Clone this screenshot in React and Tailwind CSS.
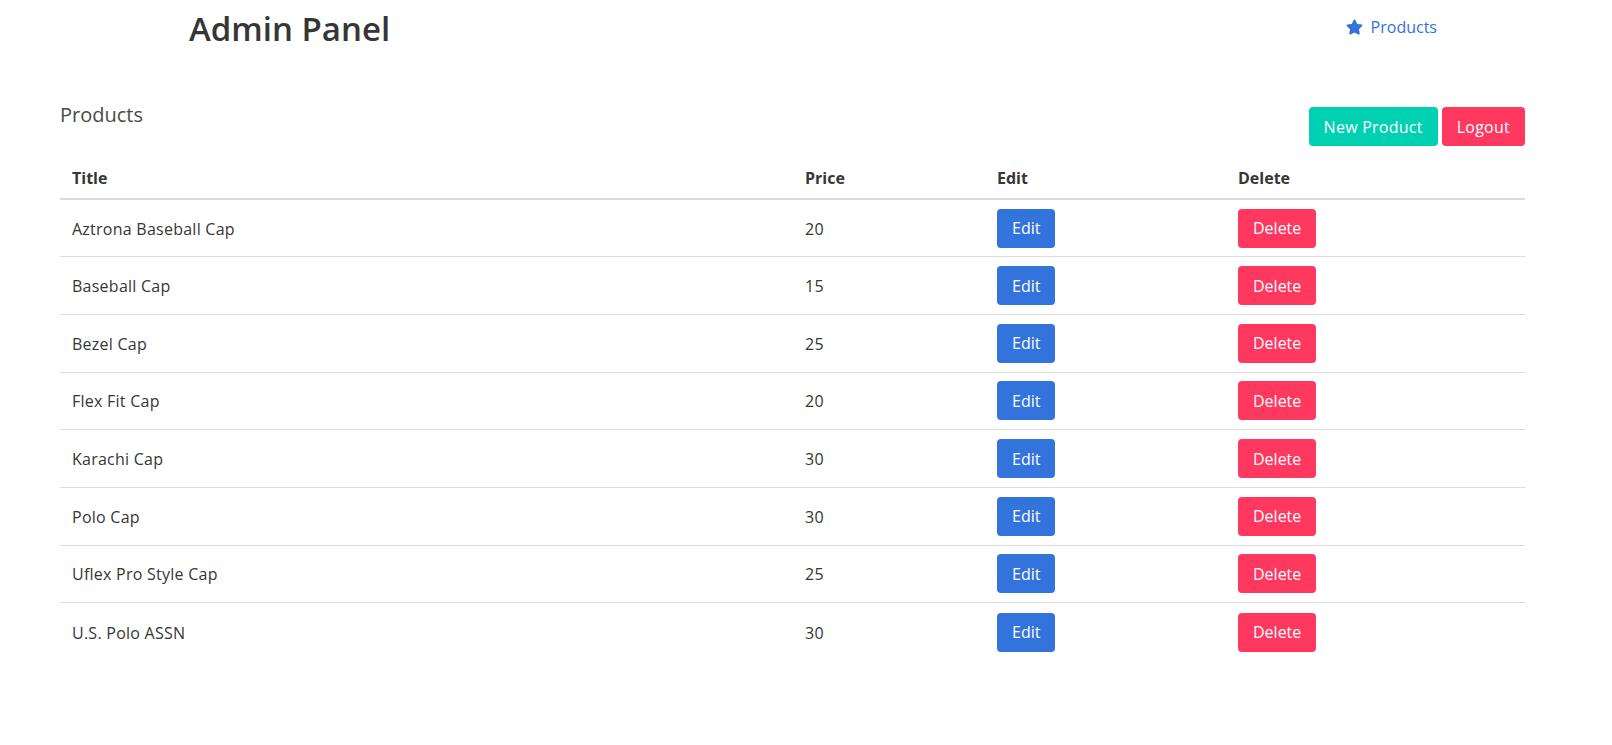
import React from "react";

const rows = [
  ["Aztrona Baseball Cap", "20"],
  ["Baseball Cap", "15"],
  ["Bezel Cap", "25"],
  ["Flex Fit Cap", "20"],
  ["Karachi Cap", "30"],
  ["Polo Cap", "30"],
  ["Uflex Pro Style Cap", "25"],
  ["U.S. Polo ASSN", "30"],
];

function Star() {
  return (
    <svg viewBox="0 0 576 512" className="w-[17px] h-[16px]" fill="#3273dc">
      <path d="M259.3 17.8L194 150.2 47.9 171.5c-26.2 3.8-36.7 36.1-17.7 54.6l105.7 103-25 145.5c-4.5 26.3 23.2 46 46.4 33.7L288 439.6l130.7 68.7c23.2 12.2 50.9-7.4 46.4-33.7l-25-145.5 105.7-103c19-18.5 8.5-50.8-17.7-54.6L382 150.2 316.7 17.8c-11.7-23.6-45.6-23.9-57.4 0z" />
    </svg>
  );
}

export default function App() {
  return (
    <div
      className="min-h-[745px] bg-white text-[#363636] text-[16px] tracking-[0.25px]"
      style={{ fontFamily: '"Open Sans", "Noto Sans", sans-serif' }}
    >
      <header className="h-[54px] flex items-center justify-between pl-[189px] pr-[175px]">
        <h1 className="text-[33px] font-semibold leading-none mt-[3px] tracking-normal">Admin Panel</h1>
        <a className="flex items-center gap-[8px] text-[#3273dc] leading-6 tracking-normal">
          <Star />
          <span>Products</span>
        </a>
      </header>

      <main className="pl-[60px] pr-[87px] mt-[46px]">
        <div className="flex justify-between items-start">
          <h2 className="text-[20px] leading-[30px] font-normal text-[#4a4a4a] tracking-normal">Products</h2>
          <div className="flex gap-[4px] mt-[7px]">
            <button className="h-[39px] px-[15px] rounded-[4px] bg-[#00d1b2] text-white leading-6">New Product</button>
            <button className="h-[39px] px-[15px] rounded-[4px] bg-[#ff3860] text-white leading-6">Logout</button>
          </div>
        </div>

        <table className="w-full table-fixed border-collapse mt-[12px]">
          <colgroup>
            <col className="w-[733px]" />
            <col className="w-[192px]" />
            <col className="w-[241px]" />
            <col className="w-[299px]" />
          </colgroup>
          <thead>
            <tr className="border-b-2 border-[#dbdbdb]">
              <th className="text-left font-bold px-[12px] py-[8px] leading-6 tracking-normal">Title</th>
              <th className="text-left font-bold px-[12px] py-[8px] leading-6 tracking-normal">Price</th>
              <th className="text-left font-bold px-[12px] py-[8px] leading-6 tracking-normal">Edit</th>
              <th className="text-left font-bold px-[12px] py-[8px] leading-6 tracking-normal">Delete</th>
            </tr>
          </thead>
          <tbody>
            {rows.map(([title, price], i) => (
              <tr
                key={title}
                className={i < rows.length - 1 ? "h-[57.7px] border-b border-[#dbdbdb]" : "h-[58px]"}
              >
                <td className="px-[12px] align-middle leading-6 pt-[1px]">{title}</td>
                <td className="px-[12px] align-middle leading-6 pt-[1px]">{price}</td>
                <td className="px-[12px] align-middle">
                  <button className="h-[39px] px-[15px] rounded-[4px] bg-[#3273dc] text-white leading-6 tracking-normal">Edit</button>
                </td>
                <td className="px-[12px] align-middle">
                  <button className="h-[39px] px-[15px] rounded-[4px] bg-[#ff3860] text-white leading-6 tracking-normal">Delete</button>
                </td>
              </tr>
            ))}
          </tbody>
        </table>
      </main>
    </div>
  );
}
